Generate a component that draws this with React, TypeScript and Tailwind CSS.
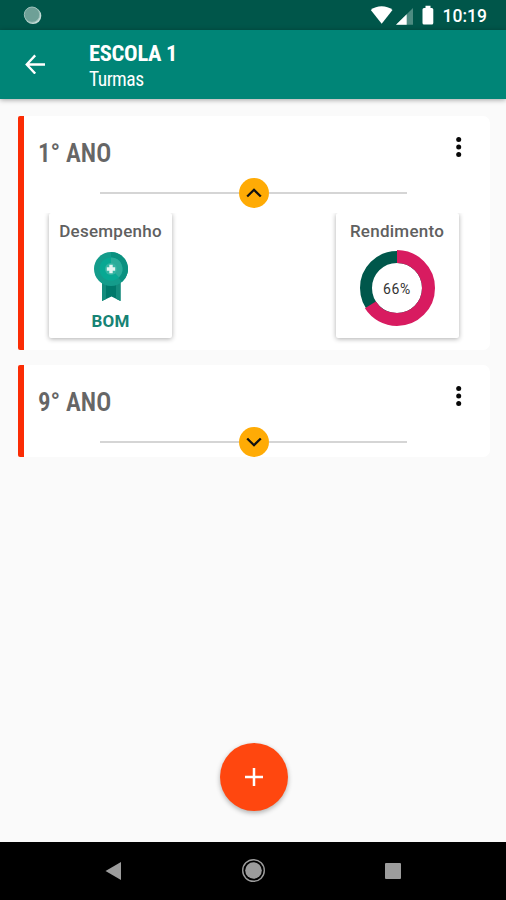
import { useState } from 'react';

interface ClassGroup {
  id: number;
  name: string;
  performance?: string;
  yieldPercent?: number;
}

const CLASS_GROUPS: ClassGroup[] = [
  { id: 1, name: '1° ANO', performance: 'BOM', yieldPercent: 66 },
  { id: 2, name: '9° ANO' },
];

const StatusBar = () => (
  <div className="flex h-[30px] shrink-0 items-center bg-[#00564a] pr-[19px] pl-[23px]">
    <svg width="19" height="19" viewBox="0 0 19 19">
      <circle cx="10" cy="9.8" r="8.3" fill="#c5dcd7" />
      <circle cx="9" cy="8.7" r="7.7" fill="#6ea097" stroke="#9cc0b9" />
    </svg>

    <div className="ml-auto flex items-center">
      <svg className="mr-[2px]" width="71" height="22" viewBox="0 0 71 22">
        <path d="M.8 6.1C6.7 1.1 16.6 1.1 22.5 6.1L11.7 19.8Z" fill="#fff" />
        <path d="M43 4V20.8H26Z" fill="#4d8b81" />
        <path d="M36.7 10.2V20.8H26Z" fill="#fff" />
        <path
          d="M55.5 1.8h5v2.2h1.3q1.5 0 1.5 1.5v13.5q0 1.5-1.5 1.5h-7.8q-1.5 0-1.5-1.5v-13.5q0-1.5 1.5-1.5h1.5Z"
          fill="#fff"
        />
      </svg>
      <span className="pt-[1px] text-[17.5px] leading-[24px] font-medium text-white">10:19</span>
    </div>
  </div>
);

const AppBar = () => (
  <header className="z-10 flex h-[68.5px] shrink-0 bg-[#008577] pl-[25px] text-white shadow-[0_1px_5px_rgba(0,0,0,0.35)]">
    <button aria-label="Voltar" className="mr-[44px] h-[68px] w-[20px]">
      <svg width="20" height="20" viewBox="0 0 20 20" fill="none" stroke="#fff" strokeWidth="2.3">
        <path d="M20 10.5H2M10.2 1.4L1.7 10.5L10.2 19.6" />
      </svg>
    </button>
    <div className="pt-[10px] font-['Roboto_Condensed','Roboto',sans-serif] font-stretch-75%">
      <h1 className="text-[22.5px] leading-[26px] font-bold tracking-[-0.3px]">ESCOLA 1</h1>
      <p className="text-[19.5px] leading-[27px] tracking-[-0.5px]">Turmas</p>
    </div>
  </header>
);

const Medal = () => (
  <svg width="34" height="50" viewBox="0 0 34 50">
    <path d="M8 29H26.5V49L17.5 44.5L8 49Z" fill="#00796b" />
    <path d="M8 29H12V47L8 49ZM22 29H26.5V49L22 46.8Z" fill="#148c7d" />
    <circle cx="17" cy="17" r="17" fill="#149c8b" />
    <path d="M17 0A17 17 0 0 1 28 30L17 17Z" fill="#0b9180" />
    <circle cx="17" cy="17" r="11.5" fill="#08a893" />
    <path d="M17 5.5A11.5 11.5 0 0 1 25 25.2L17 17Z" fill="#2bac9a" />
    <circle cx="17" cy="17" r="6" fill="#35b5a3" />
    <path d="M17 12.8V21.2M12.8 17H21.2" stroke="#e5f5f2" strokeWidth="3.4" />
  </svg>
);

const Donut = ({ percent }: { percent: number }) => (
  <div className="grid size-[76px] place-items-center">
    <svg className="col-start-1 row-start-1 -rotate-90" width="76" height="76" viewBox="0 0 76 76" fill="none">
      <circle cx="38" cy="38" r="31" stroke="#00574b" strokeWidth="12" />
      <circle
        cx="38"
        cy="38"
        r="31.5"
        stroke="#d81b60"
        strokeWidth="13"
        pathLength="100"
        strokeDasharray={`${percent} 100`}
      />
    </svg>
    <span className="col-start-1 row-start-1 pt-[2px] text-[14px] tracking-[0.7px] text-[#333]">{percent}%</span>
  </div>
);

const StatCard = ({ title, children }: { title: string; children: React.ReactNode }) => (
  <div className="flex h-[125px] w-[123px] flex-col items-center rounded-[2px] bg-white pt-[7px] shadow-[0_1px_5px_rgba(0,0,0,0.32)]">
    <h3 className="text-[17px] leading-[22px] font-medium tracking-[0.25px] whitespace-nowrap text-[#606060]">
      {title}
    </h3>
    {children}
  </div>
);

const GroupCard = ({ group, defaultOpen }: { group: ClassGroup; defaultOpen: boolean }) => {
  const [open, setOpen] = useState(defaultOpen);

  return (
    <section className="flex overflow-hidden rounded-r-[7px] rounded-l-[2px] bg-white">
      <div className="w-[6px] shrink-0 bg-[#fb2c04]" />
      <div className="flex-1">
        <div className="flex h-[62px] justify-between pr-[28px] pl-[14px]">
          <h2 className="pt-[22px] font-['Roboto_Condensed','Roboto',sans-serif] text-[25px] leading-[32px] font-semibold text-[#666] font-stretch-75%">
            {group.name}
          </h2>
          <button aria-label="Opções" className="mt-[20px] h-[22px] w-[6px]">
            <svg width="6" height="22" viewBox="0 0 6 22" fill="#080808">
              <circle cx="2.7" cy="3.5" r="2.5" />
              <circle cx="2.7" cy="11" r="2.5" />
              <circle cx="2.7" cy="18.5" r="2.5" />
            </svg>
          </button>
        </div>

        <div className="flex h-[30px] items-center pr-[83px] pl-[76px]">
          <div className="h-[2px] flex-1 bg-[#d5d5d5]" />
          <button
            onClick={() => setOpen(!open)}
            className="flex size-[30px] items-center justify-center rounded-full bg-[#ffab05]"
          >
            <svg width="16" height="10" viewBox="0 0 16 10" fill="none" stroke="#111" strokeWidth="2.3">
              <path d={open ? 'M1.2 8.5L8 1.8L14.8 8.5' : 'M1.2 1.5L8 8.2L14.8 1.5'} />
            </svg>
          </button>
          <div className="h-[2px] flex-1 bg-[#d5d5d5]" />
        </div>

        {open && group.yieldPercent !== undefined && (
          <div className="mt-[5px] flex h-[137px] justify-between overflow-hidden pr-[31.5px] pl-[25px]">
            <StatCard title="Desempenho">
              <div className="mt-[9.5px]">
                <Medal />
              </div>
              <p className="mt-[8px] text-[17px] leading-[22px] font-bold tracking-[0.2px] text-[#168374]">
                {group.performance}
              </p>
            </StatCard>
            <StatCard title="Rendimento">
              <div className="mt-[8px]">
                <Donut percent={group.yieldPercent} />
              </div>
            </StatCard>
          </div>
        )}
      </div>
    </section>
  );
};

const NavigationBar = () => (
  <nav className="flex h-[58px] shrink-0 items-center justify-between bg-black px-[105px]">
    <svg width="17" height="18" viewBox="0 0 17 18">
      <path d="M.5 9L16 0V18Z" fill="#9c9c9c" />
    </svg>
    <svg width="24" height="24" viewBox="0 0 24 24">
      <circle cx="11.5" cy="11.5" r="10.8" fill="none" stroke="#9c9c9c" strokeWidth="1.4" />
      <circle cx="11.5" cy="11.5" r="8.3" fill="#9c9c9c" />
    </svg>
    <svg width="16" height="16" viewBox="0 0 16 16">
      <rect width="16" height="16" rx="1" fill="#9c9c9c" />
    </svg>
  </nav>
);

export default function App() {
  return (
    <div className="flex h-screen w-full flex-col overflow-hidden bg-[#fafafa] font-['Roboto',sans-serif]">
      <StatusBar />
      <AppBar />

      <main className="flex flex-1 flex-col gap-[15px] pt-[17.5px] pr-[16px] pl-[18px]">
        {CLASS_GROUPS.map((group) => (
          <GroupCard key={group.id} group={group} defaultOpen={group.yieldPercent !== undefined} />
        ))}

        <button
          aria-label="Adicionar"
          className="mt-auto mb-[31px] flex size-[68px] items-center justify-center self-center rounded-full bg-[#ff470f] shadow-[0_2px_5px_rgba(0,0,0,0.3)]"
        >
          <svg width="18" height="18" viewBox="0 0 18 18" stroke="#fff" strokeWidth="2.5">
            <path d="M9 0V18M0 9H18" />
          </svg>
        </button>
      </main>

      <NavigationBar />
    </div>
  );
}
